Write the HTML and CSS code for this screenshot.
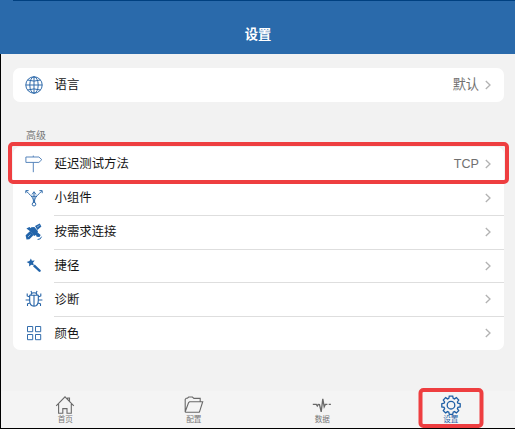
FILE: index.html
```html
<!DOCTYPE html>
<html lang="zh-CN">
<head>
<meta charset="utf-8">
<title>设置</title>
<link rel="stylesheet" href="styles.css">
</head>
<body>
<svg class="defs" width="0" height="0"><symbol id="chevron" viewBox="0 0 6 10"><path d="M.8 1 5 5 .8 9"/></symbol></svg>
<div class="app">
  <header class="header"><h1>设置</h1></header>
  <main class="main">
    <section class="card">
      <div class="row">
        <svg class="icon" viewBox="0 0 18 18"><circle cx="9" cy="9" r="8.2"/><ellipse cx="9" cy="9" rx="4.2" ry="8.2"/><path d="M9 .8v16.4M.8 9h16.4M2.6 4q6.4 2.2 12.8 0M2.6 14q6.4-2.2 12.8 0"/></svg>
        <span class="label">语言</span><span class="value">默认</span><svg class="chevron"><use href="#chevron"/></svg>
      </div>
    </section>
    <h2 class="section-title">高级</h2>
    <section class="card">
      <div class="row">
        <svg class="icon sign" viewBox="0 0 18 18"><path d="M.9 2h13l2.9 2.7-2.9 2.7H.9zM8.3 7.4v9.8M8.3.6V2"/></svg>
        <span class="label">延迟测试方法</span><span class="value latin">TCP</span><svg class="chevron"><use href="#chevron"/></svg>
        <div class="highlight highlight-row"></div>
      </div>
      <div class="row">
        <svg class="icon" viewBox="0 0 18 18"><circle cx="9" cy="15.2" r="1.8"/><path d="M9 13.3V3.5M7 5.5l2-2.8 2 2.8M8.4 13.2V11C7.9 8 4.5 5.5 1.4 2.2M9.6 13.2V11c.5-3 3.9-5.5 7-8.8M.8 4.2V1.6h2.8M14.4 1.6h2.8v2.6M6 7.3h6"/></svg>
        <span class="label">小组件</span><svg class="chevron"><use href="#chevron"/></svg>
      </div>
      <div class="row">
        <svg class="icon solid" viewBox="0 0 18 18"><path d="m10 2.9 4.8-2.4 1.6 3-4 3.6z"/><path d="m6.2 4.2 3.2-.3 3.5 4-.3 3.2-3.4 1.8-4.3-4.8z"/><path d="m.6 12.2 4.5-4.1 3.5 4-4.2 4.1-2.9.2z"/><path d="m1.4 5.6 3-1.6 3 2.6-1.6 2.2zM10.8 11.2l2.2-1.4 2.7 2.2-1.2 2-2.9-.3z"/><path class="cut" d="m12 4.1 2.6-1.7M3 14l2.4-2.4"/><path class="line" d="M12.6 16.5q3.4 0 3.9-2.8"/></svg>
        <span class="label">按需求连接</span><svg class="chevron"><use href="#chevron"/></svg>
      </div>
      <div class="row">
        <svg class="icon solid" viewBox="0 0 18 18"><path d="m5.9 1.4 1 2.3 2.8-.2-1.7 2.3 1 2.6-2.7-.7-2.2 1.7.1-2.9L1.6 5l2.9-.9z"/><path d="m8 9.2 1.7-1.6 5.8 5.3q.8.9 0 1.7-.9.8-1.8 0z"/></svg>
        <span class="label">捷径</span><svg class="chevron"><use href="#chevron"/></svg>
      </div>
      <div class="row">
        <svg class="icon bug" viewBox="0 0 18 18"><path d="M5.9 5.3C5.9 1.9 12.1 1.9 12.1 5.3zM4.7 5.3h8.6v5.2c0 7.6-8.6 7.6-8.6 0zM9 5.3V16M6.8 2.8 5.9 1M11.2 2.8l.9-1.8M4.7 7 2.2 6V3.5M13.3 7l2.5-1V3.5M4.7 10H.6M13.3 10h4.1M5 13l-2.5.8V16M13 13l2.5.8V16"/></svg>
        <span class="label">诊断</span><svg class="chevron"><use href="#chevron"/></svg>
      </div>
      <div class="row">
        <svg class="icon" viewBox="0 0 18 18"><path d="M2.5 2.5h5.2v5.2H2.5zM10.5 2.5h5.2v5.2h-5.2zM2.5 10.5h5.2v5.2H2.5zM10.5 10.5h5.2v5.2h-5.2z"/></svg>
        <span class="label">颜色</span><svg class="chevron"><use href="#chevron"/></svg>
      </div>
    </section>
  </main>
  <nav class="tabs">
    <div class="tab"><svg class="tab-icon" viewBox="0 0 20 20"><path d="m1.2 10.8 8.8-9 8.8 9M3.6 9v9.2h4.2v-4.6h4.2v4.6h4.3V9M12.7 4.4V3h1.8v3.2"/></svg><span>首页</span></div>
    <div class="tab"><svg class="tab-icon" viewBox="0 0 20 20"><path d="M1.2 16.8V4.5l1-1.3h1.2L4.7 2h3.7l1.5 1.4h6.3v3.3M1.2 16.8 4.6 7.5l1-.8h13.1l-3.2 10.1q-.2.5-.8.5H1.8z"/></svg><span>配置</span></div>
    <div class="tab"><svg class="tab-icon pulse" viewBox="0 0 20 20"><path d="M.8 9.4h3.5l1 1.6.9-1.6 1.3.2 1.7 7.2 1.6-13 1.4 8 1.1-2.4h2.1M16.7 9.4h2.2"/></svg><span>数据</span></div>
    <div class="tab active"><svg class="tab-icon" viewBox="0 0 20 20"><path d="m8.3 1.1h3.4l.5 2.3 1.2.5 2-1.3L17.7 5l-1.3 2 .5 1.2 2.3.5v3.2l-2.3.5-.5 1.2 1.3 2-2.3 2.3-2-1.3-1.2.5-.5 2.2H8.3l-.5-2.2-1.2-.5-2 1.3-2.3-2.3 1.3-2-.5-1.2-2.3-.5V8.7l2.3-.5.5-1.2-1.3-2 2.3-2.4 2 1.3 1.2-.5z"/><circle cx="10" cy="10.2" r="3.8"/></svg><span>设置</span><div class="highlight highlight-tab"></div></div>
  </nav>
</div>
</body>
</html>
```
FILE: styles.css
```css
* { box-sizing: border-box; }

body {
  margin: 0;
  font-family: "Liberation Sans", "Noto Sans CJK SC", sans-serif;
  color: #161616;
}

.defs { display: block; }

.app {
  height: 429px;
  display: flex;
  flex-direction: column;
  background: #f2f2f2;
  border-bottom: 1px solid #000;
  overflow: hidden;
}

.header {
  height: 54px;
  flex: none;
  display: flex;
  justify-content: center;
  padding: 25px 0 0 1px;
  background: linear-gradient(#004080, #004080) 13px 0 / 100% 1px no-repeat #2a6aab;
}

.header h1 {
  margin: 0;
  font-size: 13.3px;
  line-height: 20px;
  font-weight: 700;
  color: #fff;
}

.main {
  flex: 1;
  border-left: 1px solid #000;
  padding: 14px 11px 0 12px;
}

.card { background: #fff; border-radius: 7px; }

.row {
  position: relative;
  display: flex;
  align-items: center;
  height: 33.9px;
  padding: 0 12px;
}

.row + .row::before {
  content: "";
  position: absolute;
  top: 0;
  left: 41px;
  right: 0;
  height: 1px;
  background: #dedede;
}

.icon {
  width: 18px;
  height: 18px;
  margin-right: 11.5px;
  flex: none;
  fill: none;
  stroke: #2865a8;
  stroke-width: .95;
}

.icon.solid { fill: #2264aa; stroke: none; }
.icon .cut { fill: none; stroke: #fff; stroke-width: .5; }
.icon .line { fill: none; stroke: #2264aa; stroke-width: 1; }
.icon.bug { stroke-width: 1.1; }
.icon.sign { stroke: #4f80b8; }

.label { flex: 1; font-size: 12.4px; line-height: 18px; padding-top: 1px; }
.value { font-size: 13.2px; line-height: 18px; color: #707070; margin-right: 6px; }
.value.latin { font-size: 12.6px; padding-top: 1px; }

.chevron {
  width: 6px;
  height: 10px;
  margin-right: 1px;
  flex: none;
  fill: none;
  stroke: #b2b2b2;
  stroke-width: 1.3;
}

.section-title {
  margin: 26px 0 3px 13px;
  font-size: 10px;
  line-height: 16px;
  font-weight: 400;
  color: #777;
}

.highlight {
  position: absolute;
  border: 4px solid #ee3e40;
  border-radius: 5px;
}

.highlight-row { top: -5px; right: -5px; bottom: -3px; left: -5px; z-index: 1; }

.tabs {
  height: 37px;
  flex: none;
  display: flex;
  border-left: 1px solid #000;
  background: #f4f4f4;
}

.tab {
  position: relative;
  flex: 1;
  display: flex;
  flex-direction: column;
  align-items: center;
  padding-top: 4px;
  font-size: 7.6px;
  line-height: 10px;
  color: #777;
}

.tab-icon { width: 20px; height: 20px; fill: none; stroke: #686868; stroke-width: 1.1; }
.tab-icon.pulse { stroke-width: 1.3; }
.active { color: #1e5fa5; }
.active .tab-icon { stroke: #1e5fa5; stroke-width: 1.3; }
.highlight-tab { top: -3px; bottom: 0; left: 50%; width: 65px; transform: translateX(-50%); }
```
